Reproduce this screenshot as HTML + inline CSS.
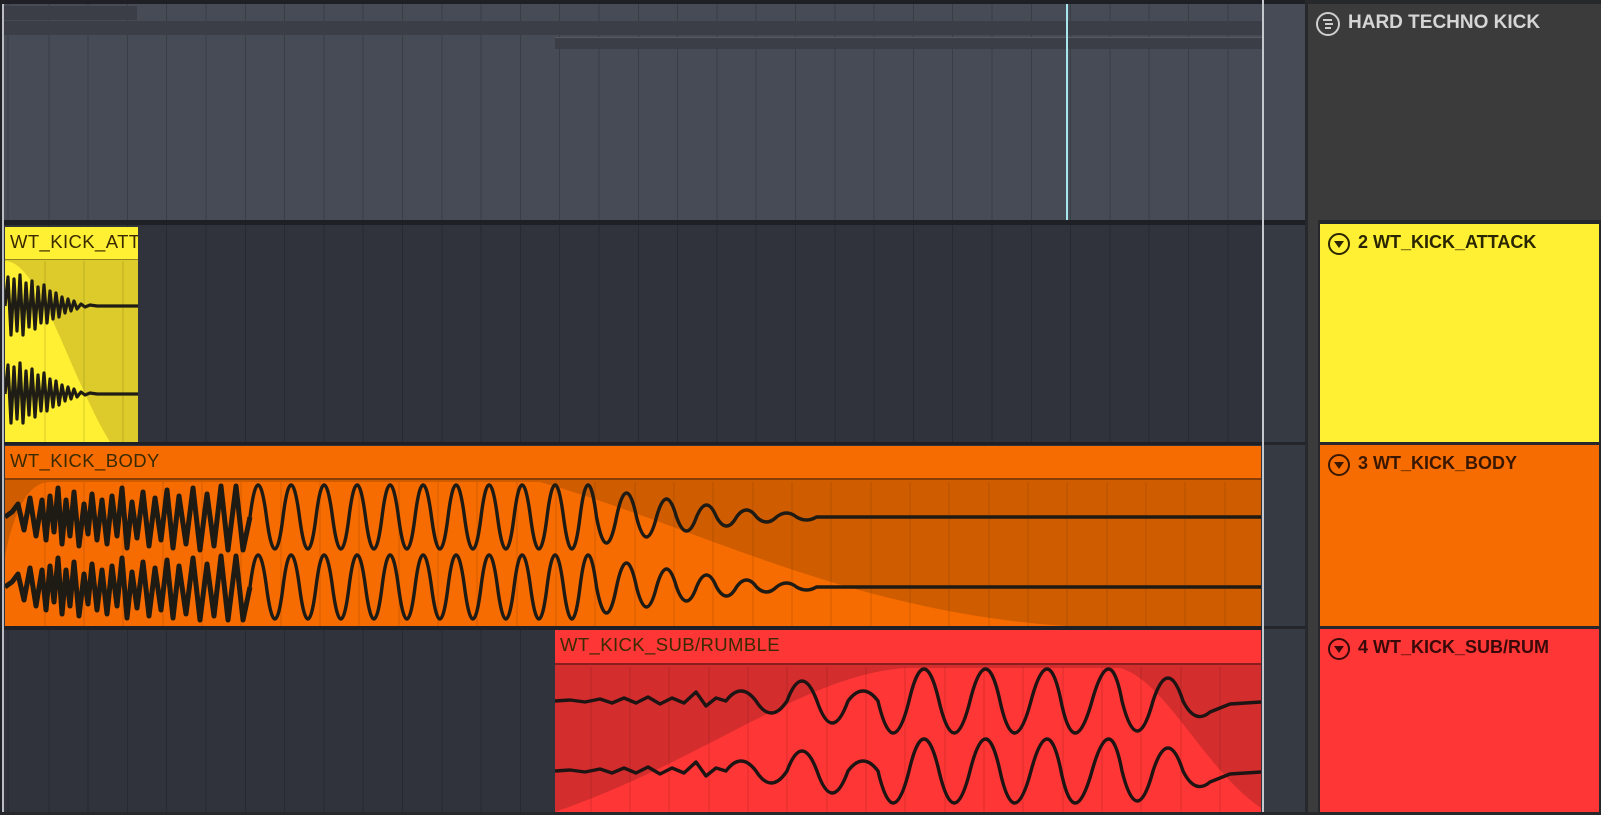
<!DOCTYPE html>
<html><head><meta charset="utf-8"><style>
*{margin:0;padding:0;box-sizing:border-box}
body{width:1601px;height:815px;overflow:hidden;background:#1e2025;font-family:"Liberation Sans",sans-serif;position:relative}
.abs{position:absolute}
.grid{background-image:repeating-linear-gradient(90deg,transparent 0 38.3px,rgba(0,0,0,.18) 38.3px 39.3px);background-position:6px 0}
.lbl{font-size:18.5px;color:#3a2a00;letter-spacing:.4px;white-space:nowrap;overflow:hidden}
.card{font-weight:bold;font-size:18px;color:#2a1500;white-space:nowrap;overflow:hidden;padding:8px 0 0 38px}
.ico{position:absolute;left:8px;top:9px;width:22px;height:22px;border:2px solid currentColor;border-radius:50%}
.ico:after{content:"";position:absolute;left:4px;top:6px;border-left:5px solid transparent;border-right:5px solid transparent;border-top:7px solid currentColor}
</style></head><body>
<div class="abs" style="left:0;top:0;width:1307px;height:815px;background:#1e2025"></div>
<div class="abs grid" style="left:4px;top:4px;width:1259px;height:216px;background-color:#464b55"></div>
<div class="abs" style="left:4px;top:21px;width:1259px;height:14px;background:#3b3e46"></div>
<div class="abs" style="left:4px;top:6px;width:133px;height:14px;background:#3b3e46"></div>
<div class="abs" style="left:555px;top:37px;width:708px;height:12px;background:#3b3e46;border-top:1px solid #555a64"></div>
<div class="abs" style="left:1263px;top:4px;width:44px;height:216px;background:#464b55"></div>
<div class="abs grid" style="left:4px;top:225px;width:1259px;height:217px;background-color:#30333c"></div>
<div class="abs" style="left:4px;top:445px;width:1259px;height:181px;background:#30333c"></div>
<div class="abs grid" style="left:4px;top:630px;width:1259px;height:182px;background-color:#30333c"></div>
<div class="abs" style="left:1263px;top:225px;width:42px;height:587px;background:#363a42"></div>
<div class="abs" style="left:1263px;top:442px;width:42px;height:3px;background:#24262b"></div>
<div class="abs" style="left:1263px;top:626px;width:42px;height:3px;background:#24262b"></div>
<div class="abs" style="left:1066px;top:4px;width:2px;height:216px;background:#a8e6ee"></div>

<!-- Yellow clip -->
<div class="abs" style="left:5px;top:227px;width:133px;height:215px;background:#dccb2a;overflow:hidden">
<div class="abs lbl" style="left:0;top:0;width:133px;height:33px;background:#fff033;border-bottom:1px solid #8f8420;padding:4px 0 0 5px">WT_KICK_ATTACK</div>
<svg class="abs" style="left:0;top:0" width="133" height="215">
<path d="M0,215 L0,34 C35,34 65,150 105,215 Z" fill="#fff033"/>
<g stroke="rgba(0,0,0,.15)" stroke-width="1"><line x1="40" y1="34" x2="40" y2="215"/><line x1="79" y1="34" x2="79" y2="215"/><line x1="118" y1="34" x2="118" y2="215"/></g>
<g fill="none" stroke="#1e1c14" stroke-width="3.2" stroke-linejoin="round">
<path id="yw" d="M0,79 L3,50 6,108 9,52 12,104 15,48 18,108 21,56 24,100 27,54 30,102 33,60 36,96 39,58 42,96 45,64 48,92 51,66 54,90 57,70 60,86 63,72 66,84 69,74 72,82 76,77 80,80 85,78 92,79 133,79"/>
<use href="#yw" transform="translate(0,88)"/>
</g></svg>
</div>

<!-- Orange clip -->
<div class="abs" style="left:5px;top:446px;width:1256px;height:180px;background:#cf5d00;overflow:hidden">
<div class="abs lbl" style="left:0;top:0;width:1256px;height:34px;background:#f76c00;border-bottom:2px solid #8a3d00;padding:4px 0 0 5px">WT_KICK_BODY</div>
<svg class="abs" style="left:0;top:0" width="1256" height="180">
<path d="M0,180 L0,110 C10,60 25,36 45,36 L535,36 C690,80 840,165 1060,180 Z" fill="#f76c00"/>
<g stroke="rgba(0,0,0,.13)" stroke-width="1">
<line x1="40" y1="36" x2="40" y2="180"/><line x1="79" y1="36" x2="79" y2="180"/><line x1="118" y1="36" x2="118" y2="180"/><line x1="158" y1="36" x2="158" y2="180"/><line x1="197" y1="36" x2="197" y2="180"/><line x1="236" y1="36" x2="236" y2="180"/><line x1="276" y1="36" x2="276" y2="180"/><line x1="315" y1="36" x2="315" y2="180"/><line x1="354" y1="36" x2="354" y2="180"/><line x1="394" y1="36" x2="394" y2="180"/><line x1="433" y1="36" x2="433" y2="180"/><line x1="472" y1="36" x2="472" y2="180"/><line x1="512" y1="36" x2="512" y2="180"/><line x1="551" y1="36" x2="551" y2="180"/><line x1="590" y1="36" x2="590" y2="180"/><line x1="630" y1="36" x2="630" y2="180"/><line x1="669" y1="36" x2="669" y2="180"/><line x1="708" y1="36" x2="708" y2="180"/><line x1="748" y1="36" x2="748" y2="180"/><line x1="787" y1="36" x2="787" y2="180"/><line x1="826" y1="36" x2="826" y2="180"/><line x1="866" y1="36" x2="866" y2="180"/><line x1="905" y1="36" x2="905" y2="180"/><line x1="944" y1="36" x2="944" y2="180"/><line x1="984" y1="36" x2="984" y2="180"/><line x1="1023" y1="36" x2="1023" y2="180"/><line x1="1062" y1="36" x2="1062" y2="180"/><line x1="1102" y1="36" x2="1102" y2="180"/><line x1="1141" y1="36" x2="1141" y2="180"/><line x1="1180" y1="36" x2="1180" y2="180"/><line x1="1220" y1="36" x2="1220" y2="180"/>
</g>
<g transform="translate(-5,-446)" fill="none" stroke="#1e1a14" stroke-linejoin="round">
<path id="on" stroke-width="5" d="M5,517 L12,512 18,504 24,530 30,498 36,536 42,500 46,540 50,496 54,532 58,488 62,544 66,500 70,536 74,492 79,546 84,504 88,534 92,494 97,540 102,500 107,544 112,496 117,536 122,488 127,548 132,502 137,538 143,492 149,546 155,498 161,540 167,490 173,548 179,496 186,544 193,488 200,550 207,494 214,546 221,486 228,550 236,486 243,550 250,517"/>
<use href="#on" transform="translate(0,70)"/>
<path id="ow" stroke-width="3.4" d="M250,517 Q258,453 266.5,517 T283,517 T299.5,517 T316,517 T332.5,517 T349,517 T365.5,517 T382,517 T398.5,517 T415,517 T431.5,517 T448,517 T464.5,517 T481,517 T497.5,517 T514,517 T530.5,517 T547,517 T563.5,517 T580,517 T596.5,517 Q606.5,569 616.5,517 Q626.5,469 636.5,517 Q646.5,557 656.5,517 Q666.5,481 676.5,517 Q686.5,545 696.5,517 Q706.5,493 716.5,517 Q726.5,535 736.5,517 Q746.5,503 756.5,517 Q766.5,527 776.5,517 Q786.5,509 796.5,517 Q806.5,523 816.5,517 L1261,517"/>
<use href="#ow" transform="translate(0,70)"/>
</g></svg>
</div>

<!-- Red clip -->
<div class="abs" style="left:555px;top:630px;width:706px;height:182px;background:#d42d2d;overflow:hidden">
<div class="abs lbl" style="left:0;top:0;width:706px;height:35px;background:#ff3636;border-bottom:2px solid #8a1d1d;padding:4px 0 0 5px">WT_KICK_SUB/RUMBLE</div>
<svg class="abs" style="left:0;top:0" width="706" height="182">
<path d="M0,182 C150,130 250,45 350,38 L565,38 C610,50 650,140 706,178 L706,182 Z" fill="#ff3636"/>
<g stroke="rgba(0,0,0,.13)" stroke-width="1">
<line x1="36" y1="37" x2="36" y2="182"/><line x1="75" y1="37" x2="75" y2="182"/><line x1="114" y1="37" x2="114" y2="182"/><line x1="154" y1="37" x2="154" y2="182"/><line x1="193" y1="37" x2="193" y2="182"/><line x1="232" y1="37" x2="232" y2="182"/><line x1="272" y1="37" x2="272" y2="182"/><line x1="311" y1="37" x2="311" y2="182"/><line x1="350" y1="37" x2="350" y2="182"/><line x1="390" y1="37" x2="390" y2="182"/><line x1="429" y1="37" x2="429" y2="182"/><line x1="468" y1="37" x2="468" y2="182"/><line x1="508" y1="37" x2="508" y2="182"/><line x1="547" y1="37" x2="547" y2="182"/><line x1="586" y1="37" x2="586" y2="182"/><line x1="626" y1="37" x2="626" y2="182"/><line x1="665" y1="37" x2="665" y2="182"/>
</g>
<g transform="translate(-555,-630)" fill="none" stroke="#1e1414" stroke-width="3.4" stroke-linejoin="round">
<path id="rw" d="M555,701 L570,700 585,702 600,699 612,703 624,698 636,703 648,697 660,704 672,698 684,703 696,692 706,706 716,698 726,701 Q741,681 756,701 Q771,725 787,701 Q802,661 817,701 Q832,745 848,701 Q863,681 878,701 Q893,765 909,701 Q924,637 939,701 T970,701 T1000,701 T1031,701 T1061,701 T1092,701 T1122,701 Q1137,761 1153,701 Q1168,655 1183,701 Q1195,725 1210,712 L1230,704 1261,702"/>
<use href="#rw" transform="translate(0,70)"/>
</g></svg>
</div>

<div class="abs" style="left:2px;top:4px;width:2px;height:811px;background:#b9bcc2"></div>
<div class="abs" style="left:1262px;top:0;width:2px;height:815px;background:#c5c8cc"></div>

<div class="abs" style="left:1307px;top:4px;width:294px;height:811px;background:#3b3b3b"></div>
<div class="abs" style="left:1305px;top:0;width:3px;height:815px;background:#26282c"></div>
<div class="abs" style="left:1307px;top:0;width:294px;height:4px;background:#26282c"></div>
<div class="abs" style="left:1316px;top:9px;width:280px;height:28px;color:#d6d6d6;font-weight:bold;font-size:19px;padding:3px 0 0 32px">
<span style="position:absolute;left:0;top:3px;width:24px;height:24px;border:2px solid #cfcfcf;border-radius:50%"></span>
<span style="position:absolute;left:7px;top:10px;width:9px;height:2px;background:#cfcfcf"></span>
<span style="position:absolute;left:9px;top:14px;width:8px;height:2px;background:#cfcfcf"></span>
<span style="position:absolute;left:9px;top:18px;width:6px;height:2px;background:#cfcfcf"></span>
HARD TECHNO KICK</div>
<div class="abs" style="left:1318px;top:220px;width:283px;height:595px;background:#26282c"></div>
<div class="abs card" style="left:1320px;top:224px;width:279px;height:218px;background:#fff033;color:#2a2600">
<span class="ico"></span>2 WT_KICK_ATTACK</div>
<div class="abs card" style="left:1320px;top:445px;width:279px;height:181px;background:#f76c00;color:#3a1800">
<span class="ico"></span>3 WT_KICK_BODY</div>
<div class="abs card" style="left:1320px;top:629px;width:279px;height:183px;background:#ff3636;color:#3a0a0a">
<span class="ico"></span>4 WT_KICK_SUB/RUM</div>
<div class="abs" style="left:0;top:812px;width:1601px;height:3px;background:#26282c"></div>
</body></html>
